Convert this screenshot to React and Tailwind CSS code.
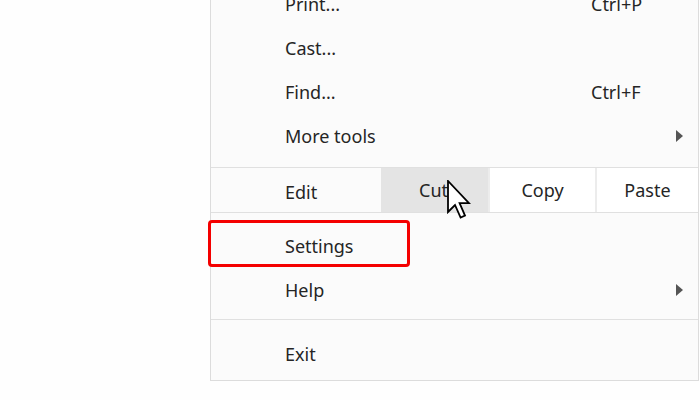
import React from 'react';

const font = { fontFamily: '"Noto Sans", "Open Sans", sans-serif' };

const Arrow = () => (
    <svg width="9" height="14" viewBox="0 0 9 14" className="mr-[14px]">
        <path d="M1 1 L8 7 L1 13 Z" fill="#555" />
    </svg>
);

const Row = ({ label, shortcut, sub }) => (
    <div className="h-[44px] flex items-center pl-[74px]">
        <span className="flex-1">{label}</span>
        {shortcut && <span className="w-[107px]">{shortcut}</span>}
        {sub && <Arrow />}
    </div>
);

const Cursor = () => (
    <svg
        width="24"
        height="40"
        viewBox="0 0 12 20"
        className="absolute left-[447px] top-[180px]"
    >
        <path
            d="M0.5 0.5 L0.5 16 L4 12.5 L6.8 18.8 L9 17.8 L6.3 11.6 L11 11.6 Z"
            fill="#fff"
            stroke="#000"
            strokeWidth="0.9"
            strokeLinejoin="miter"
        />
    </svg>
);

export default function App() {
    return (
        <div className="relative w-[700px] h-[400px] overflow-hidden bg-[#fefefe] text-[18px] text-[#252525]" style={font}>
            <div className="ml-[210px] -mt-[18px] w-[489px] bg-[#fbfbfb] border border-t-0 border-[#dcdcdc]">
                <Row label="Print..." shortcut="Ctrl+P" />
                <Row label="Cast..." />
                <Row label="Find..." shortcut="Ctrl+F" />
                <Row label="More tools" sub />

                <div className="mt-[9px] h-[46px] flex border-y border-[#e0e0e0]">
                    <div className="w-[170px] pl-[74px] pt-[5px] flex items-center">Edit</div>
                    <div className="w-[107px] bg-[#e4e4e4] flex items-center justify-center pr-[2px]">Cut</div>
                    <div className="w-[2px] bg-[#ececec]" />
                    <div className="w-[105px] bg-white flex items-center justify-center">Copy</div>
                    <div className="w-[2px] bg-[#ececec]" />
                    <div className="flex-1 bg-white flex items-center justify-center">Paste</div>
                </div>

                <div className="mt-[11px]">
                    <Row label="Settings" />
                    <Row label="Help" sub />
                </div>
                <div className="mt-[7px] h-[1px] bg-[#e0e0e0]" />
                <div className="mt-[12px] mb-[4px]">
                    <Row label="Exit" />
                </div>
            </div>

            <div className="absolute left-[208px] top-[220px] w-[202px] h-[47px] border-[3px] border-[#f40000] rounded-[4px]" />
            <Cursor />
        </div>
    );
}
